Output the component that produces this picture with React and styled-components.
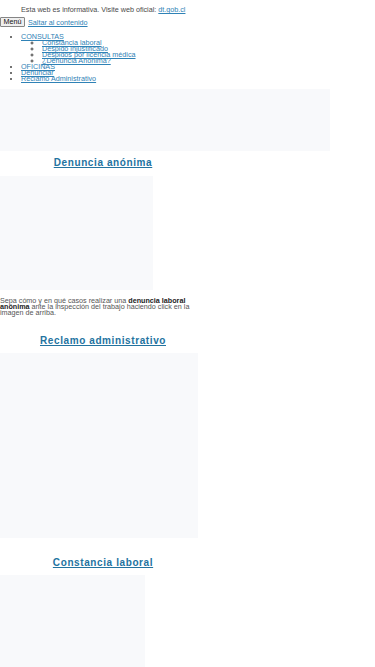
import React from "react";
import styled, { createGlobalStyle } from "styled-components";

const GlobalStyle = createGlobalStyle`
  html, body { margin: 0; padding: 0; background: #ffffff; }
  body {
    font-family: "Liberation Sans", Arial, Helvetica, sans-serif;
    font-size: 7.2px;
    color: #444444;
  }
`;

const Page = styled.div`
  width: 375px;
`;

const Notice = styled.div`
  padding: 6px 0 3px 21px;
  line-height: 8px;
  color: #4a4a4a;
`;

const Link = styled.a`
  color: #2f82b6;
  text-decoration: underline;
`;

const Controls = styled.div`
  display: flex;
  align-items: center;
  gap: 3px;
  height: 10px;
`;

const MenuButton = styled.button`
  font-family: inherit;
  font-size: 7.2px;
  height: 10px;
  width: 25px;
  padding: 0;
  margin: 0;
  line-height: 8px;
  background: #efefef;
  color: #111;
  border: 1px solid #858585;
  border-radius: 1px;
`;

const NavList = styled.ul`
  margin: ${(p) => (p.$nested ? "0" : "7px 0 0")};
  padding-left: 21px;
  line-height: 6px;
  list-style: ${(p) => (p.$nested ? "circle" : "disc")};
`;

const Placeholder = styled.div`
  width: ${(p) => p.$w}px;
  height: ${(p) => p.$h}px;
  background: #f8f9fb;
  margin-top: ${(p) => p.$mt || 0}px;
`;

const Heading = styled.h2`
  width: 206px;
  margin: 0;
  padding: ${(p) => p.$pt}px 0 ${(p) => p.$pb}px;
  text-align: center;
  font-size: 10px;
  line-height: 12px;
  font-weight: 700;
  letter-spacing: 0.6px;
`;

const HeadingLink = styled.a`
  color: #23739f;
  text-decoration: underline;
`;

const Caption = styled.p`
  margin: 8px 0 0;
  width: 198px;
  line-height: 6.2px;
  color: #555555;
  b { color: #222; }
`;

export default function App() {
  return (
    <Page>
      <GlobalStyle />
      <Notice>
        Esta web es informativa. Visite web oficial: <Link href="#">dt.gob.cl</Link>
      </Notice>
      <Controls>
        <MenuButton>Menú</MenuButton>
        <Link href="#">Saltar al contenido</Link>
      </Controls>
      <NavList>
        <li>
          <Link href="#">CONSULTAS</Link>
          <NavList $nested>
            <li><Link href="#">Constancia laboral</Link></li>
            <li><Link href="#">Despido injustificado</Link></li>
            <li><Link href="#">Despidos por licencia médica</Link></li>
            <li><Link href="#">¿Denuncia Anónima?</Link></li>
          </NavList>
        </li>
        <li><Link href="#">OFICINAS</Link></li>
        <li><Link href="#">Denunciar</Link></li>
        <li><Link href="#">Reclamo Administrativo</Link></li>
      </NavList>
      <Placeholder $w={330} $h={62} $mt={7} />
      <Heading $pt={6} $pb={7}>
        <HeadingLink href="#">Denuncia anónima</HeadingLink>
      </Heading>
      <Placeholder $w={153} $h={114} />
      <Caption>
        Sepa cómo y en qué casos realizar una <b>denuncia laboral anónima</b> ante la
        inspección del trabajo haciendo click en la imagen de arriba.
      </Caption>
      <Heading $pt={18} $pb={6}>
        <HeadingLink href="#">Reclamo administrativo</HeadingLink>
      </Heading>
      <Placeholder $w={198} $h={185} />
      <Heading $pt={19} $pb={6}>
        <HeadingLink href="#">Constancia laboral</HeadingLink>
      </Heading>
      <Placeholder $w={145} $h={120} />
    </Page>
  );
}
